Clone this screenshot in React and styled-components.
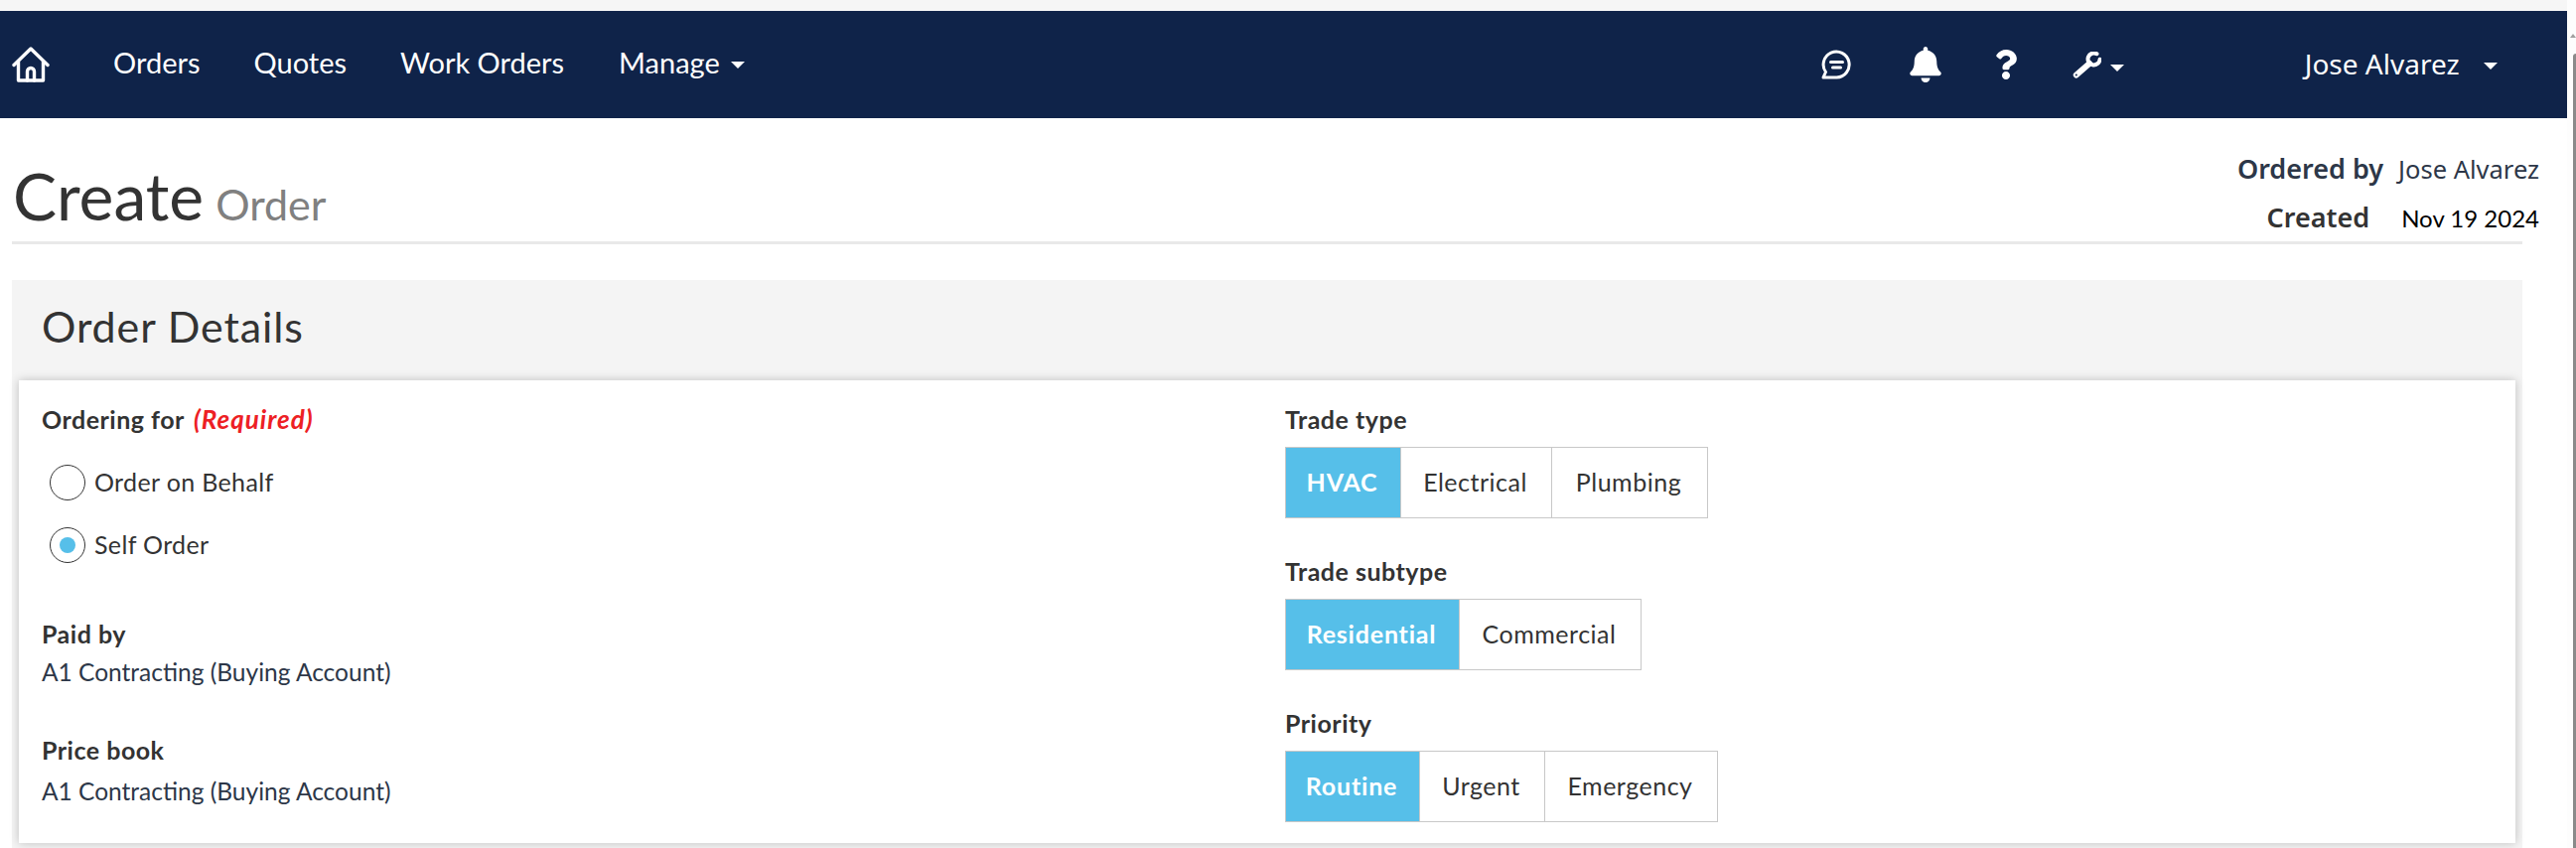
import React from "react";
import styled, { createGlobalStyle } from "styled-components";
import { FaBell, FaQuestion } from "react-icons/fa";

const Global = createGlobalStyle`
  html, body {
    margin: 0;
    padding: 0;
    background: #fff;
    overflow: hidden;
  }
  * { box-sizing: border-box; }
  body { font-family: "Lato", "Noto Sans", sans-serif; }
`;

const HomeIcon = () => (
  <svg width="38" height="36" viewBox="0 0 38 36" fill="none" stroke="#fff" strokeWidth="3.4" strokeLinecap="round" strokeLinejoin="round">
    <path d="M2 18.5 19 2l17 16.5" />
    <path d="M6.5 15v19h25V15" />
    <path d="M15.5 34v-9a3.5 3.5 0 0 1 7 0v9" />
  </svg>
);

const ChatIcon = () => (
  <svg width="30" height="30" viewBox="0 0 30 30" fill="none" stroke="#fff" strokeWidth="3" strokeLinecap="round" strokeLinejoin="round">
    <path d="M4.5 22.5A13 13 0 1 1 15.5 28H2z" />
    <path d="M9.5 12.5h12M11.5 18h8" />
  </svg>
);

const WrenchIcon = () => (
  <svg width="29" height="27" viewBox="0 0 29 27" fill="none" stroke="#fff" strokeLinecap="round" strokeLinejoin="round">
    <path d="M24.5 2.2a6 6 0 1 0 3 5.6" strokeWidth="4" />
    <path d="M17 12 3.8 23.5" strokeWidth="6" />
    <circle cx="3.8" cy="23.5" r="1" fill="#0f2349" stroke="none" />
  </svg>
);

const Shell = styled.div`
  display: flex;
  width: 2594px;
  height: 854px;
  overflow: hidden;
`;
const Main = styled.div`
  width: 2585px;
  display: flex;
  flex-direction: column;
`;
const Scrollbar = styled.div`
  width: 9px;
  background: #fdfdfd;
  display: flex;
  flex-direction: column;
  align-items: flex-end;
`;
const ScrollArrow = styled.div`
  margin-top: 34px;
  width: 0;
  height: 0;
  border-left: 3px solid transparent;
  border-right: 3px solid transparent;
  border-bottom: 4px solid #a0a0a0;
`;
const ScrollThumb = styled.div`
  margin-top: 16px;
  width: 3px;
  flex: 1;
  background: #8a8a8a;
  border-radius: 3px 0 0 0;
`;
const TopStrip = styled.div`
  height: 11px;
  background: #f6f6f6;
`;
const Nav = styled.nav`
  height: 108px;
  background: #0f2349;
  display: flex;
  align-items: center;
  color: #fff;
  font-size: 29px;
  padding-left: 12px;
`;
const NavLink = styled.span`
  margin-left: ${(p) => p.$left}px;
  display: flex;
  align-items: center;
  line-height: 36px;
  margin-top: -4px;
`;
const Caret = styled.i`
  display: block;
  width: 0;
  height: 0;
  margin-left: ${(p) => p.$left}px;
  margin-top: ${(p) => p.$top || 4}px;
  border-left: 7px solid transparent;
  border-right: 7px solid transparent;
  border-top: 7px solid #fff;
`;
const NavIcon = styled.span`
  display: flex;
  align-items: center;
  margin-left: ${(p) => p.$left}px;
  margin-top: ${(p) => p.$top || 0}px;
`;
const UserName = styled.span`
  margin-left: ${(p) => p.$left}px;
  font-family: "Noto Sans", sans-serif;
  font-size: 28px;
  display: flex;
  align-items: center;
  margin-top: -2px;
`;
const Header = styled.header`
  margin-left: 12px;
  width: 2528px;
  height: 127px;
  border-bottom: 3px solid #e9e9e9;
  display: flex;
  justify-content: space-between;
`;
const Title = styled.h1`
  margin: 42px 0 0 1px;
  font-weight: 400;
  font-size: 66px;
  line-height: 72px;
  color: #333;
`;
const SubTitle = styled.small`
  font-size: 43px;
  color: #808080;
  margin-left: 12px;
`;
const Meta = styled.div`
  margin: 33px -17px 0 0;
  display: flex;
  flex-direction: column;
  align-items: flex-end;
  gap: 13px;
`;
const MetaRow = styled.div`
  display: flex;
  align-items: baseline;
  height: 36px;
  line-height: 36px;
`;
const MetaLabel = styled.b`
  font-family: "Noto Sans", sans-serif;
  font-size: 27px;
  font-weight: 600;
  color: ${(p) => p.$color};
  margin-right: ${(p) => p.$gap}px;
`;
const MetaValue = styled.span`
  font-family: ${(p) => p.$font};
  font-size: ${(p) => p.$size}px;
  color: ${(p) => p.$color};
`;
const Panel = styled.section`
  margin: 36px 0 0 12px;
  width: 2528px;
  height: 572px;
  background: #f4f4f4;
  padding: 0 7px;
`;
const PanelHead = styled.div`
  height: 101px;
  display: flex;
  align-items: center;
  padding: 0 0 8px 23px;
  font-size: 43px;
  color: #333;
  letter-spacing: 0.9px;
`;
const Card = styled.div`
  height: 466px;
  background: #fff;
  box-shadow: 0 0 9px rgba(0, 0, 0, 0.22);
  padding: 23px 0 0 23px;
  display: grid;
  grid-template-columns: 1252px 1fr;
`;
const Column = styled.div`
  display: flex;
  flex-direction: column;
`;
const Label = styled.div`
  height: 32px;
  line-height: 32px;
  font-size: 25px;
  letter-spacing: 0.5px;
  font-weight: 700;
  color: #333;
  margin-top: ${(p) => p.$top || 0}px;
`;
const Required = styled.em`
  color: #ed2024;
  margin-left: 9px;
  font-size: 26px;
  letter-spacing: 1px;
`;
const Radio = styled.label`
  display: flex;
  align-items: center;
  height: 36px;
  margin: ${(p) => p.$top}px 0 0 8px;
  font-size: 25px;
  letter-spacing: 0.35px;
  line-height: 32px;
  color: #333;
  gap: 9px;
`;
const RadioText = styled.span`
  margin-top: -3px;
`;
const RadioMark = styled.span`
  width: 36px;
  height: 36px;
  border: 1px solid #333;
  border-radius: 50%;
  display: flex;
  align-items: center;
  justify-content: center;
  &::after {
    content: "";
    display: ${(p) => (p.$on ? "block" : "none")};
    width: 16px;
    height: 16px;
    border-radius: 50%;
    background: #56bfe9;
  }
`;
const Value = styled.div`
  height: 32px;
  line-height: 32px;
  font-size: 24.5px;
  color: #2d3748;
  margin-top: ${(p) => p.$top}px;
`;
const Toggle = styled.div`
  display: flex;
  height: 72px;
  margin: 12px 0 37px;
`;
const ToggleBtn = styled.button`
  width: ${(p) => p.$w}px;
  height: 72px;
  font-family: inherit;
  font-size: 25px;
  letter-spacing: ${(p) => (p.$active ? 0.8 : 0.5)}px;
  font-weight: ${(p) => (p.$active ? 700 : 400)};
  color: ${(p) => (p.$active ? "#fff" : "#333")};
  background: ${(p) => (p.$active ? "#56bfe9" : "#fff")};
  border: 1px solid #c8c8c8;
  margin-left: -1px;
  padding: 0 2px 3px 0;
  &:first-child { margin-left: 0; }
`;

const groups = [
  { label: "Trade type", items: [["HVAC", 117], ["Electrical", 153], ["Plumbing", 158]] },
  { label: "Trade subtype", items: [["Residential", 176], ["Commercial", 184]] },
  { label: "Priority", items: [["Routine", 136], ["Urgent", 127], ["Emergency", 175]] },
];

export default function App() {
  return (
    <>
      <Global />
      <Shell>
        <Main>
          <TopStrip />
          <Nav>
            <HomeIcon />
            <NavLink $left={64}>Orders</NavLink>
            <NavLink $left={54}>Quotes</NavLink>
            <NavLink $left={54}>Work Orders</NavLink>
            <NavLink $left={55}>Manage<Caret $left={11} /></NavLink>
            <NavIcon $left={1084}><ChatIcon /></NavIcon>
            <NavIcon $left={57}><FaBell size={36} /></NavIcon>
            <NavIcon $left={48} $top={-1}><FaQuestion size={30} /></NavIcon>
            <NavIcon $left={52}><WrenchIcon /></NavIcon>
            <Caret $left={9} $top={6} />
            <UserName $left={182}>Jose Alvarez<Caret $left={24} /></UserName>
          </Nav>
          <Header>
            <Title>Create<SubTitle>Order</SubTitle></Title>
            <Meta>
              <MetaRow>
                <MetaLabel $color="#2d3748" $gap={15}>Ordered by</MetaLabel>
                <MetaValue $font={'"Noto Sans", sans-serif'} $size={25.5} $color="#2d3748">Jose Alvarez</MetaValue>
              </MetaRow>
              <MetaRow>
                <MetaLabel $color="#333" $gap={32}>Created</MetaLabel>
                <MetaValue $font={'"Lato", sans-serif'} $size={24} $color="#000">Nov 19 2024</MetaValue>
              </MetaRow>
            </Meta>
          </Header>
          <Panel>
            <PanelHead>Order Details</PanelHead>
            <Card>
              <Column>
                <Label>Ordering for<Required>(Required)</Required></Label>
                <Radio $top={30}><RadioMark /><RadioText>Order on Behalf</RadioText></Radio>
                <Radio $top={27}><RadioMark $on /><RadioText>Self Order</RadioText></Radio>
                <Label $top={55}>Paid by</Label>
                <Value $top={7}>A1 Contracting (Buying Account)</Value>
                <Label $top={46}>Price book</Label>
                <Value $top={10}>A1 Contracting (Buying Account)</Value>
              </Column>
              <Column>
                {groups.map((g) => (
                  <div key={g.label}>
                    <Label>{g.label}</Label>
                    <Toggle>
                      {g.items.map(([name, w], i) => (
                        <ToggleBtn key={name} $w={w} $active={i === 0}>{name}</ToggleBtn>
                      ))}
                    </Toggle>
                  </div>
                ))}
              </Column>
            </Card>
          </Panel>
        </Main>
        <Scrollbar>
          <ScrollArrow />
          <ScrollThumb />
        </Scrollbar>
      </Shell>
    </>
  );
}
